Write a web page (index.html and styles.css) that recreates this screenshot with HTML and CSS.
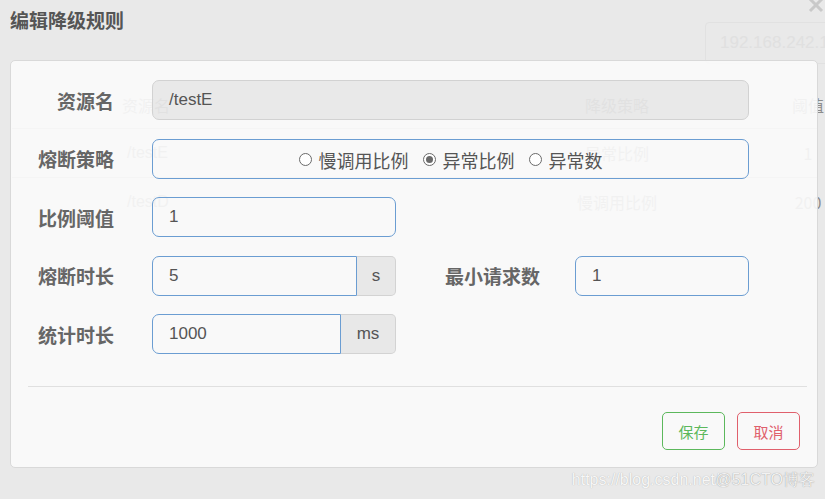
FILE: index.html
```html
<!DOCTYPE html>
<html lang="zh">
<head>
<meta charset="utf-8">
<title>编辑降级规则</title>
<link rel="stylesheet" href="styles.css">
</head>
<body>
<div class="page">
  <div class="topbar">
    <div class="ipbox">192.168.242.180:8080</div>
  </div>
  <div class="table">
    <div class="trow thead">
      <div class="c1">资源名</div>
      <div class="c2">降级策略</div>
      <div class="c3">阈值</div>
    </div>
    <div class="trow">
      <div class="c1 pad">/testE</div>
      <div class="c2">异常比例</div>
      <div class="c3">1</div>
    </div>
    <div class="trow">
      <div class="c1 pad">/testD</div>
      <div class="c2">慢调用比例</div>
      <div class="c3">200</div>
    </div>
  </div>
</div>

<div class="modal">
  <div class="modal-header">
    <h4 class="title">编辑降级规则</h4>
    <svg class="close" width="16" height="16" viewBox="0 0 16 16"><path d="M2 1 L14 13 M14 1 L2 13" stroke="#c9c9c9" stroke-width="3" fill="none"/></svg>
  </div>
  <div class="card">
    <div class="frow">
      <label class="flabel">资源名</label>
      <div class="finput disabled wide">/testE</div>
    </div>
    <div class="frow">
      <label class="flabel">熔断策略</label>
      <div class="finput wide radios">
        <span class="radio"><span class="dot"></span>慢调用比例</span>
        <span class="radio"><span class="dot checked"></span>异常比例</span>
        <span class="radio"><span class="dot"></span>异常数</span>
      </div>
    </div>
    <div class="frow">
      <label class="flabel">比例阈值</label>
      <div class="finput short">1</div>
    </div>
    <div class="frow">
      <label class="flabel">熔断时长</label>
      <div class="group">
        <div class="finput grow">5</div>
        <div class="addon s">s</div>
      </div>
      <label class="flabel2">最小请求数</label>
      <div class="finput mini">1</div>
    </div>
    <div class="frow last">
      <label class="flabel">统计时长</label>
      <div class="group">
        <div class="finput grow">1000</div>
        <div class="addon ms">ms</div>
      </div>
    </div>
    <div class="hr"></div>
    <div class="footer">
      <button class="btn save">保存</button>
      <button class="btn cancel">取消</button>
    </div>
  </div>
  <div class="watermark"><span class="wm1">https://blog.csdn.net/</span><span class="wm2">@51CTO博客</span></div>
</div>
</body>
</html>
```

FILE: styles.css
```css
html, body {
  margin: 0;
  padding: 0;
}
body {
  width: 825px;
  height: 499px;
  overflow: hidden;
  background: #e9e9e9;
  font-family: "Noto Sans CJK SC", "Liberation Sans", sans-serif;
  position: relative;
}

/* background page (seen through the modal) */
.page {
  color: #8c8c8c;
}
.topbar {
  height: 64px;
  display: flex;
  justify-content: flex-end;
  padding-top: 22px;
  box-sizing: border-box;
}
.ipbox {
  width: 150px;
  height: 42px;
  margin-right: -30px;
  box-sizing: border-box;
  border: 1px solid #e1e1e1;
  border-radius: 4px;
  padding-left: 14px;
  line-height: 40px;
  font-family: "Liberation Sans", sans-serif;
  font-size: 17px;
  color: #e0e0e0;
  white-space: nowrap;
  overflow: hidden;
}
.table {
  margin: 18px 8px 0 12px;
  font-size: 16px;
}
.trow {
  display: flex;
  height: 48px;
  align-items: center;
  padding-left: 110px;
  border-top: 1px solid #c0c0c0;
}
.trow.thead {
  height: 46px;
  border-top: none;
}
.c1 { width: 450px; flex-shrink: 0; }
.c1.pad { padding-left: 5px; box-sizing: border-box; font-family: "Liberation Sans", sans-serif; }
.c2 { width: 90px; flex-shrink: 0; text-align: center; white-space: nowrap; }
.c3 { width: 292px; flex-shrink: 0; text-align: center; }

/* modal */
.modal {
  position: absolute;
  top: 0;
  left: 0;
  right: 0;
  bottom: 0;
  padding-left: 10px;
}
.modal-header {
  height: 60px;
  position: relative;
}
.title {
  margin: 0;
  font-size: 19px;
  font-weight: 700;
  line-height: 40px;
  color: #555;
}
.close {
  position: absolute;
  right: 1px;
  top: -2px;
}
.card {
  width: 808px;
  height: 408px;
  box-sizing: border-box;
  border: 1px solid #d9d9d9;
  border-radius: 5px;
  background: rgba(250, 250, 250, 0.92);
  padding-top: 19px;
}
.frow {
  display: flex;
  align-items: center;
  height: 40px;
  margin-bottom: 18.5px;
}
.frow.last { margin-bottom: 0; }
.flabel {
  width: 103px;
  margin-right: 38px;
  text-align: right;
  font-size: 19px;
  font-weight: 700;
  color: #666;
}
.flabel2 {
  margin-left: 49px;
  width: 96px;
  margin-right: 34px;
  font-size: 19px;
  font-weight: 700;
  color: #666;
  white-space: nowrap;
}
.finput {
  height: 40px;
  box-sizing: border-box;
  border: 1px solid #6b9dd2;
  border-radius: 7px;
  padding-left: 16px;
  display: flex;
  align-items: center;
  font-family: "Liberation Sans", sans-serif;
  font-size: 17px;
  color: #555;
}
.finput.disabled {
  background: rgba(0, 0, 0, 0.062);
  border-color: #d2d2d2;
}
.wide { width: 597px; }
.short { width: 244px; }
.mini { width: 174px; }
.group {
  display: flex;
  width: 244px;
  height: 40px;
}
.finput.grow {
  flex: 1;
  border-radius: 7px 0 0 7px;
}
.addon {
  box-sizing: border-box;
  height: 40px;
  border: 1px solid #d3d3d3;
  border-left: none;
  border-radius: 0 5px 5px 0;
  background: rgba(0, 0, 0, 0.068);
  display: flex;
  align-items: center;
  justify-content: center;
  font-family: "Liberation Sans", sans-serif;
  font-size: 17px;
  color: #555;
}
.addon.s { width: 39px; }
.addon.ms { width: 55px; }
.radios {
  justify-content: center;
  padding-left: 0;
  font-family: "Noto Sans CJK SC", sans-serif;
  font-size: 18px;
  gap: 14px;
}
.radio {
  display: flex;
  align-items: center;
  gap: 7px;
  color: #555;
  line-height: 1;
  padding-top: 2px;
}
.dot {
  width: 13px;
  height: 13px;
  box-sizing: border-box;
  border: 1px solid #6a6a6a;
  border-radius: 50%;
  background: #fff;
  position: relative;
}
.dot.checked::after {
  content: "";
  position: absolute;
  left: 2px;
  top: 2px;
  width: 7px;
  height: 7px;
  border-radius: 50%;
  background: #6a6a6a;
}
.hr {
  height: 1px;
  background: #e0e0e0;
  margin: 32px 10px 0 17px;
}
.footer {
  display: flex;
  justify-content: flex-end;
  gap: 12px;
  padding: 25px 17px 0 0;
}
.btn {
  height: 38px;
  width: 63px;
  box-sizing: border-box;
  background: transparent;
  border: 1px solid;
  border-radius: 5px;
  font-family: "Noto Sans CJK SC", sans-serif;
  font-size: 15px;
  padding: 0;
}
.btn.save { color: #5cb85c; border-color: #5cb85c; }
.btn.cancel { color: #e0606c; border-color: #e0606c; }
.watermark {
  position: absolute;
  right: 10px;
  bottom: 8px;
  font-family: "Liberation Sans", sans-serif;
  font-size: 16px;
  color: #f7f7f7;
  text-shadow: 0 0 1px #a8a8a8;
}
.wm2 {
  margin-left: -4px;
  color: #f2f2f2;
  text-shadow: 0 0 1px #8a8a8a;
}
```
